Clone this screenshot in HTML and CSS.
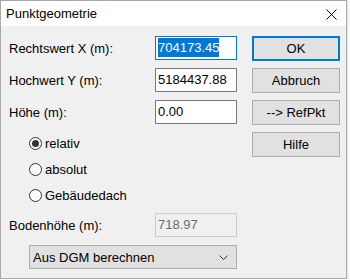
FILE: index.html
```html
<!DOCTYPE html>
<html>

<head>
    <title>Punktgeometrie</title>
    <link rel="stylesheet" href="styles.css">
</head>

<body>
    <div class="window">
        <div class="titlebar">
            <span class="title">Punktgeometrie</span>
            <svg class="close" width="11" height="11" viewBox="0 0 11 11">
                <path d="M0.5 0.5 L10.5 10.5 M10.5 0.5 L0.5 10.5" stroke="#000" stroke-width="1" fill="none" />
            </svg>
        </div>
        <div class="content">
            <div class="fields">
                <div class="row">
                    <span class="label">Rechtswert X (m):</span>
                    <div class="field focus"><span class="sel">704173.45</span></div>
                </div>
                <div class="row">
                    <span class="label">Hochwert Y (m):</span>
                    <div class="field">5184437.88</div>
                </div>
                <div class="row">
                    <span class="label">Höhe (m):</span>
                    <div class="field">0.00</div>
                </div>
                <div class="radios">
                    <div class="radio"><span class="dot checked"></span>relativ</div>
                    <div class="radio"><span class="dot"></span>absolut</div>
                    <div class="radio"><span class="dot"></span>Gebäudedach</div>
                </div>
                <div class="row ground">
                    <span class="label">Bodenhöhe (m):</span>
                    <div class="field disabled">718.97</div>
                </div>
                <div class="combo">
                    <span>Aus DGM berechnen</span>
                    <svg width="9" height="5" viewBox="0 0 9 5">
                        <path d="M0.5 0.5 L4.5 4.5 L8.5 0.5" stroke="#333" stroke-width="1" fill="none" />
                    </svg>
                </div>
            </div>
            <div class="buttons">
                <button class="btn default">OK</button>
                <button class="btn">Abbruch</button>
                <button class="btn">--&gt; RefPkt</button>
                <button class="btn">Hilfe</button>
            </div>
        </div>
    </div>
</body>

</html>
```
FILE: styles.css
```css
body {
    margin: 0;
    background: #fff;
    font-family: "Liberation Sans", Arial, sans-serif;
    font-size: 13px;
    color: #000;
}

.window {
    width: 345px;
    height: 277px;
    border: 1px solid #a8a8a8;
    background: #f0f0f0;
    box-shadow: 1px 1px 2px rgba(0, 0, 0, 0.12);
}

.titlebar {
    height: 25px;
    background: #fff;
    display: flex;
    align-items: center;
    justify-content: space-between;
    padding: 0 9px 0 5px;
}

.title {
    font-size: 13px;
}

.close {
    margin-top: 1px;
}

.content {
    display: flex;
    padding: 10px 0 0 8px;
}

.fields {
    width: 228px;
    display: flex;
    flex-direction: column;
}

.row {
    display: flex;
    align-items: center;
    height: 24px;
    margin-bottom: 8px;
}

.label {
    width: 146px;
}

.field {
    box-sizing: border-box;
    width: 82px;
    height: 24px;
    border: 1px solid #7a7a7a;
    background: #fff;
    padding: 0 2px;
    line-height: 22px;
    white-space: nowrap;
}

.field.focus {
    border-color: #0078d7;
}

.sel {
    background: #0078d7;
    color: #fff;
    display: inline-block;
    line-height: 19px;
}

.field.disabled {
    background: #f0f0f0;
    border-color: #cccccc;
    color: #6d6d6d;
}

.radios {
    margin-top: -2px;
    padding-left: 20px;
}

.radio {
    height: 26px;
    display: flex;
    align-items: center;
}

.dot {
    box-sizing: border-box;
    width: 13px;
    height: 13px;
    border: 1px solid #333;
    border-radius: 50%;
    background: #fff;
    margin-right: 3px;
    display: flex;
    align-items: center;
    justify-content: center;
}

.dot.checked::after {
    content: "";
    width: 7px;
    height: 7px;
    border-radius: 50%;
    background: #333;
}

.ground {
    margin-top: 5px;
}

.combo {
    box-sizing: border-box;
    margin-left: 20px;
    width: 208px;
    height: 24px;
    border: 1px solid #adadad;
    background: #e1e1e1;
    display: flex;
    align-items: center;
    justify-content: space-between;
    padding: 0 8px 0 3px;
}

.buttons {
    margin-left: 15px;
    display: flex;
    flex-direction: column;
    gap: 7px;
}

.btn {
    box-sizing: border-box;
    width: 88px;
    height: 25px;
    border: 1px solid #adadad;
    background: #e1e1e1;
    font-family: inherit;
    font-size: 13px;
    color: #000;
    padding: 0;
}

.btn.default {
    border: 2px solid #0078d7;
}
```
